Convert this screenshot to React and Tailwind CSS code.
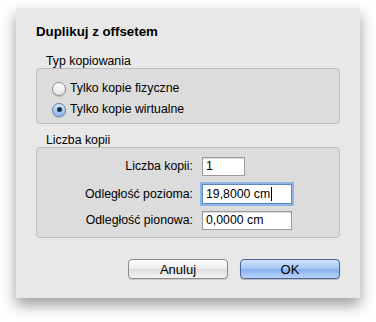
import React from "react";

function Radio({ checked, label }) {
  return (
    <div className="flex items-center h-[21px]">
      {checked ? (
        <span className="w-[14px] h-[14px] rounded-full border border-[#5d7db5] bg-[linear-gradient(#d6e6fa,#8fb6ea)] shadow-[0_1px_1px_rgba(0,0,0,0.2)] flex items-center justify-center">
          <span className="w-[5px] h-[5px] rounded-full bg-[#1b2a44]" />
        </span>
      ) : (
        <span className="w-[14px] h-[14px] rounded-full border border-[#8e8e8e] bg-[linear-gradient(#ffffff,#e4e4e4)] shadow-[0_1px_1px_rgba(0,0,0,0.15)]" />
      )}
      <span className="ml-[4px]">{label}</span>
    </div>
  );
}

function Field({ label, value, width, focused }) {
  return (
    <div className="flex items-center h-[26px]">
      <span className="w-[165px] text-right pr-[9px]">{label}</span>
      <div
        className={
          focused
            ? "h-[20px] border border-[#5a87c6] bg-white flex items-center pl-[3px] shadow-[0_0_0_2px_#8fb3e3] " + width
            : "h-[19px] border border-[#9b9b9b] bg-white flex items-center pl-[3px] shadow-[inset_0_1px_1px_rgba(0,0,0,0.15)] " + width
        }
      >
        {value}
        {focused && <span className="ml-[1px] w-px h-[14px] bg-black" />}
      </div>
    </div>
  );
}

export default function App() {
  return (
    <div
      className="w-[376px] h-[322px] bg-white overflow-hidden text-[12.3px] text-black"
      style={{ fontFamily: '"Lucida Grande", "Liberation Sans", Arial, sans-serif' }}
    >
      <div className="ml-[16px] mt-[8px] w-[344px] h-[290px] bg-[#e8e8e8] shadow-[0_7px_14px_rgba(0,0,0,0.4)] flex flex-col px-[20px] pt-[16px]">
        <h1 className="text-[13.3px] font-bold leading-[16px]">Duplikuj z offsetem</h1>

        <div className="mt-[15px] pl-[10px] leading-[13px]">Typ kopiowania</div>
        <div className="h-[56px] rounded-[4px] border border-[#bdbdbd] bg-[#dcdcdc] pl-[15px] pt-[9px] flex flex-col">
          <Radio label="Tylko kopie fizyczne" />
          <Radio checked label="Tylko kopie wirtualne" />
        </div>

        <div className="mt-[10px] pl-[10px] leading-[13px]">Liczba kopii</div>
        <div className="h-[91px] rounded-[4px] border border-[#bdbdbd] bg-[#dcdcdc] pt-[5px] flex flex-col">
          <Field label="Liczba kopii:" value="1" width="w-[43px]" />
          <div className="h-[2px]" />
          <Field label="Odległość pozioma:" value="19,8000 cm" width="w-[90px]" focused />
          <Field label="Odległość pionowa:" value="0,0000 cm" width="w-[90px]" />
        </div>

        <div className="mt-[21px] flex justify-end gap-[12px]">
          <button className="w-[100px] h-[20px] rounded-[4px] border border-[#8a8a8a] bg-[linear-gradient(#ffffff,#ececec_50%,#dedede_51%,#f4f4f4)] text-[13px] leading-none shadow-[0_1px_1px_rgba(0,0,0,0.15)]">
            Anuluj
          </button>
          <button className="w-[100px] h-[20px] rounded-[4px] border border-[#4d5e9c] bg-[linear-gradient(#cfe2fb,#a6c7f3_50%,#86b2ee_51%,#b6d3f8)] text-[13px] leading-none shadow-[0_1px_1px_rgba(0,0,0,0.2)]">
            OK
          </button>
        </div>
      </div>
    </div>
  );
}
